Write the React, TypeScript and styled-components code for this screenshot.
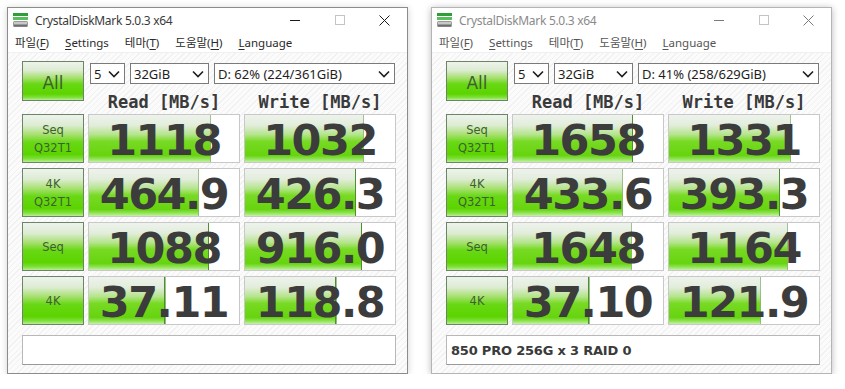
import styled, { createGlobalStyle } from "styled-components";

const GlobalStyle = createGlobalStyle`
  body {
    margin: 0;
    background: #ffffff;
  }
`;

const Desktop = styled.div`
  display: flex;
  gap: 23px;
  padding: 7px 0 0 7px;
  align-items: flex-start;
`;

const Window = styled.div<{ $active: boolean }>`
  width: 399px;
  display: flex;
  flex-direction: column;
  background: #ffffff;
  border: 1px solid ${(p) => (p.$active ? "#8c8c8c" : "#b4b4b4")};
  box-shadow: 0 1px 7px rgba(0, 0, 0, ${(p) => (p.$active ? 0.18 : 0.28)});
`;

const TitleBar = styled.div<{ $active: boolean }>`
  height: 24px;
  display: flex;
  align-items: center;
  padding-left: 4px;
  font-family: "Noto Sans", "Noto Sans CJK KR", sans-serif;
  font-size: 12px;
  color: ${(p) => (p.$active ? "#3a3a3a" : "#8a8a8a")};
`;

const TitleText = styled.span`
  margin-left: 6px;
  letter-spacing: -0.3px;
`;

const Controls = styled.div`
  margin-left: auto;
  display: flex;
  align-items: center;
`;

const ControlButton = styled.div`
  width: 45px;
  height: 24px;
  display: flex;
  align-items: center;
  justify-content: center;
`;

const MenuBar = styled.div<{ $active: boolean }>`
  height: 20px;
  display: flex;
  align-items: center;
  gap: 16px;
  padding-left: 7px;
  font-family: "Noto Sans", "Noto Sans CJK KR", sans-serif;
  font-size: 11.5px;
  color: ${(p) => (p.$active ? "#2a2a2a" : "#555555")};
  border-bottom: 1px solid #f0f0f0;
`;

const MenuItem = styled.span`
  white-space: nowrap;
  u {
    text-decoration-thickness: 1px;
    text-underline-offset: 2px;
  }
`;

const Body = styled.div`
  padding: 8px 11px 8px 14px;
  background: repeating-linear-gradient(
    -45deg,
    #fbfbfb 0px,
    #fbfbfb 3px,
    #f1f1f1 3px,
    #f1f1f1 4px
  );
`;

const Grid = styled.div`
  display: grid;
  grid-template-columns: 62px 152px 152px;
  grid-template-rows: 48px repeat(4, 49px) 35px;
  column-gap: 4px;
  row-gap: 5px;
`;

const greenButton = `
  background: linear-gradient(
    to bottom,
    #eef3ec 0%,
    #dcecd2 22%,
    #a6e06e 42%,
    #68d814 58%,
    #5cd400 84%,
    #7ee03a 93%,
    #b8ee90 100%
  );
`;

const AllButton = styled.div`
  height: 40px;
  box-sizing: border-box;
  border: 1px solid #6d8466;
  ${greenButton}
  display: flex;
  align-items: center;
  justify-content: center;
  padding-top: 4px;
  font-family: "DejaVu Sans", sans-serif;
  font-size: 17px;
  color: #3f5f30;
`;

const TopControls = styled.div`
  grid-column: 2 / span 2;
  display: flex;
  flex-direction: column;
`;

const SelectRow = styled.div`
  display: flex;
  gap: 5px;
  margin: 2px 0 0 2px;
`;

const Select = styled.div<{ $width: number }>`
  width: ${(p) => p.$width}px;
  height: 21px;
  box-sizing: border-box;
  border: 1px solid #7a7a7a;
  background: #ffffff;
  display: flex;
  align-items: center;
  padding: 0 4px 0 3px;
  font-family: "Noto Sans", sans-serif;
  font-size: 13px;
  color: #1e1e1e;
  svg {
    margin-left: auto;
  }
`;

const HeaderRow = styled.div`
  display: grid;
  grid-template-columns: 152px 152px;
  column-gap: 4px;
  margin-top: 9px;
`;

const Header = styled.div`
  text-align: center;
  font-family: "DejaVu Sans Mono", monospace;
  font-weight: bold;
  font-size: 17px;
  line-height: 18px;
  color: #3a3a3a;
`;

const Label = styled.div`
  box-sizing: border-box;
  border: 1px solid #6d8466;
  ${greenButton}
  display: flex;
  flex-direction: column;
  align-items: center;
  justify-content: center;
  font-family: "DejaVu Sans", sans-serif;
  font-size: 11.5px;
  line-height: 18px;
  color: #3f5f30;
`;

const Value = styled.div`
  box-sizing: border-box;
  border: 1px solid #c8c8c8;
  background-color: #ffffff;
  background-repeat: no-repeat;
  background-image: linear-gradient(
      to right,
      transparent calc(100% - 1px),
      #4f8d33 calc(100% - 1px)
    ),
    linear-gradient(
      to bottom,
      #eef2ec 0%,
      #e2eddb 22%,
      #b4e48a 42%,
      #78da24 56%,
      #66d40e 86%,
      #8ce250 93%,
      #c6f0a6 100%
    );
  display: flex;
  align-items: center;
  justify-content: center;
  padding-top: 2px;
  font-family: "DejaVu Sans", sans-serif;
  font-weight: bold;
  font-size: 43px;
  letter-spacing: -1.5px;
  color: #3c3c3c;
`;

const Comment = styled.div`
  grid-column: 1 / span 3;
  align-self: end;
  height: 30px;
  box-sizing: border-box;
  border: 1px solid #b8b8b8;
  border-bottom-color: #9a9a9a;
  background: #ffffff;
  display: flex;
  align-items: center;
  padding-left: 4px;
  font-family: "DejaVu Sans", sans-serif;
  font-weight: bold;
  font-size: 13px;
  letter-spacing: -0.2px;
  color: #3a3a3a;
`;

const Chevron = () => (
  <svg width="12" height="8" viewBox="0 0 12 8">
    <path d="M1 1.5 L6 6.5 L11 1.5" fill="none" stroke="#1e1e1e" strokeWidth="1.6" />
  </svg>
);

const AppIcon = () => (
  <svg width="17" height="16" viewBox="0 0 17 16">
    <rect x="1" y="1" width="15" height="3" fill="#2f9e3a" />
    <rect x="1" y="5" width="15" height="3" fill="#56c05a" />
    <rect x="1" y="9" width="15" height="6" rx="1.5" fill="#9a9a9a" />
    <rect x="2" y="10" width="13" height="2" fill="#c8c8c8" />
    <rect x="2" y="13" width="13" height="1.5" fill="#6e6e6e" />
  </svg>
);

const WindowControls = ({ active }: { active: boolean }) => {
  const c = active ? "#1a1a1a" : "#7a7a7a";
  return (
    <Controls>
      <ControlButton>
        <svg width="10" height="10" viewBox="0 0 10 10">
          <path d="M0 5.5 H10" stroke={c} strokeWidth="1" />
        </svg>
      </ControlButton>
      <ControlButton>
        <svg width="10" height="10" viewBox="0 0 10 10">
          <rect x="0.5" y="0.5" width="9" height="9" fill="none" stroke="#c4c4c4" strokeWidth="1" />
        </svg>
      </ControlButton>
      <ControlButton>
        <svg width="11" height="11" viewBox="0 0 11 11">
          <path d="M0.5 0.5 L10.5 10.5 M10.5 0.5 L0.5 10.5" stroke={c} strokeWidth="1" />
        </svg>
      </ControlButton>
    </Controls>
  );
};

type Result = { read: string; readFill: number; write: string; writeFill: number };

type Bench = {
  active: boolean;
  drive: string;
  comment: string;
  results: Result[];
};

const tests = [["Seq", "Q32T1"], ["4K", "Q32T1"], ["Seq"], ["4K"]];

const benches: Bench[] = [
  {
    active: true,
    drive: "D: 62% (224/361GiB)",
    comment: "",
    results: [
      { read: "1118", readFill: 81, write: "1032", writeFill: 79 },
      { read: "464.9", readFill: 73, write: "426.3", writeFill: 74 },
      { read: "1088", readFill: 80, write: "916.0", writeFill: 78 },
      { read: "37.11", readFill: 51, write: "118.8", writeFill: 61 },
    ],
  },
  {
    active: false,
    drive: "D: 41% (258/629GiB)",
    comment: "850 PRO 256G x 3 RAID 0",
    results: [
      { read: "1658", readFill: 80, write: "1331", writeFill: 81 },
      { read: "433.6", readFill: 73, write: "393.3", writeFill: 74 },
      { read: "1648", readFill: 79, write: "1164", writeFill: 79 },
      { read: "37.10", readFill: 51, write: "121.9", writeFill: 61 },
    ],
  },
];

const menu: [string, string, string][] = [
  ["파일(", "F", ")"],
  ["", "S", "ettings"],
  ["테마(", "T", ")"],
  ["도움말(", "H", ")"],
  ["", "L", "anguage"],
];

function DiskMark({ bench }: { bench: Bench }) {
  return (
    <Window $active={bench.active}>
      <TitleBar $active={bench.active}>
        <AppIcon />
        <TitleText>CrystalDiskMark 5.0.3 x64</TitleText>
        <WindowControls active={bench.active} />
      </TitleBar>
      <MenuBar $active={bench.active}>
        {menu.map(([a, key, b]) => (
          <MenuItem key={key}>
            {a}
            <u>{key}</u>
            {b}
          </MenuItem>
        ))}
      </MenuBar>
      <Body>
        <Grid>
          <AllButton>All</AllButton>
          <TopControls>
            <SelectRow>
              <Select $width={35}>
                5<Chevron />
              </Select>
              <Select $width={79}>
                32GiB<Chevron />
              </Select>
              <Select $width={181}>
                {bench.drive}
                <Chevron />
              </Select>
            </SelectRow>
            <HeaderRow>
              <Header>Read [MB/s]</Header>
              <Header>Write [MB/s]</Header>
            </HeaderRow>
          </TopControls>
          {bench.results.map((r, i) => [
            <Label key={"l" + i}>
              {tests[i].map((t) => (
                <span key={t}>{t}</span>
              ))}
            </Label>,
            <Value key={"r" + i} style={{ backgroundSize: `${r.readFill}% 100%` }}>
              {r.read}
            </Value>,
            <Value key={"w" + i} style={{ backgroundSize: `${r.writeFill}% 100%` }}>
              {r.write}
            </Value>,
          ])}
          <Comment>{bench.comment}</Comment>
        </Grid>
      </Body>
    </Window>
  );
}

export default function App() {
  return (
    <>
      <GlobalStyle />
      <Desktop>
        {benches.map((b) => (
          <DiskMark key={b.drive} bench={b} />
        ))}
      </Desktop>
    </>
  );
}
